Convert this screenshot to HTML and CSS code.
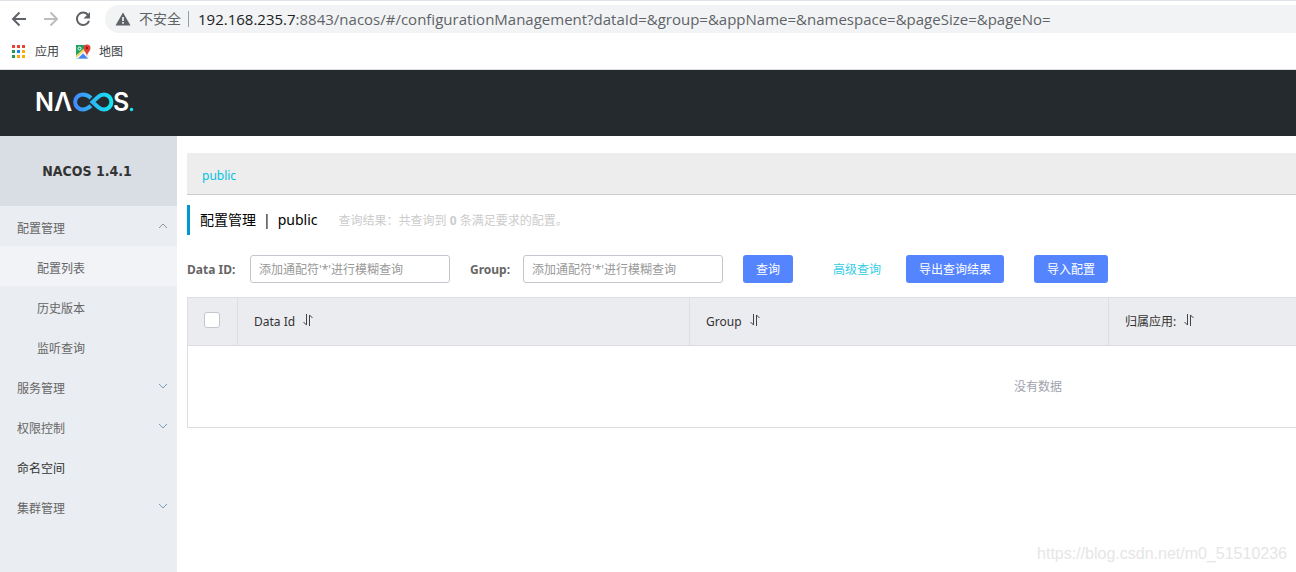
FILE: index.html
```html
<!DOCTYPE html>
<html lang="zh-CN">
<head>
<meta charset="utf-8">
<title>Nacos</title>
<link rel="stylesheet" href="styles.css">
</head>
<body>
<div class="window">
  <div class="browser">
    <div class="toolbar">
      <button class="nav-btn" type="button" aria-label="后退"><svg width="16" height="16" viewBox="0 0 16 16"><path d="M15 8H2M8.500 1.500L2 8l6.500 6.500" fill="none" stroke="#5f6368" stroke-width="2"/></svg></button>
      <button class="nav-btn" type="button" aria-label="前进"><svg width="16" height="16" viewBox="0 0 16 16"><path d="M1 8h13M7.500 1.500L14 8l-6.500 6.500" fill="none" stroke="#babcbe" stroke-width="2"/></svg></button>
      <button class="nav-btn" type="button" aria-label="刷新"><svg width="16" height="16" viewBox="0 0 16 16"><path d="M13.200 4.200A6.200 6.200 0 1 0 14 9.800" fill="none" stroke="#5f6368" stroke-width="2"/><path d="M15 1v6.500H8.500z" fill="#5f6368"/></svg></button>
      <div class="address">
        <svg width="16" height="14" viewBox="0 0 16 14"><path d="M8 0.500L15.500 13.500H0.500z" fill="#5f6368"/><path d="M7.200 5h1.600v4H7.200zM7.200 10h1.600v1.700H7.200z" fill="#fff"/></svg>
        <span class="insecure">不安全</span>
        <span class="url"><span class="host">192.168.235.7</span>:8843/nacos/#/configurationManagement?dataId=&amp;group=&amp;appName=&amp;namespace=&amp;pageSize=&amp;pageNo=</span>
      </div>
    </div>
    <nav class="bookmarks">
      <a href="#apps"><svg width="14" height="14" viewBox="0 0 14 14"><path d="M0 0h3v3H0zM5 0h3v3H5zM10 0h3v3h-3z" fill="#ea4335"/><path d="M0 5h3v3H0zM0 10h3v3H0z" fill="#249a4b"/><path d="M5 5h3v3H5z" fill="#1a84f0"/><path d="M10 5h3v3h-3zM5 10h3v3H5zM10 10h3v3h-3z" fill="#fbab07"/></svg>应用</a>
      <a href="#maps"><svg width="15" height="15" viewBox="0 0 15 15"><path d="M0 1h12v13.500H0z" fill="#1fa463"/><path d="M0 13L9 5l4 4v5.500H0z" fill="#f4f4f4"/><path d="M2 14.500l5-5 5 5z" fill="#4285f4"/><path d="M0 11.500l8-7 1.500 1.500L0 14z" fill="#fdd663"/><path d="M11 12C10.500 8.500 7.500 7 7.500 4a3.500 3.500 0 0 1 7 0c0 3-3 4.500-3.500 8z" fill="#e34133"/><circle cx="11" cy="4" r="1.200" fill="#8c1c15"/><circle cx="3.500" cy="4.500" r="1.500" fill="none" stroke="#fff"/></svg>地图</a>
    </nav>
  </div>
  <header class="header">
    <a href="#home" aria-label="NACOS">
      <svg class="logo" width="98" height="20" viewBox="0 0 98 20">
        <defs><linearGradient id="loop" gradientUnits="userSpaceOnUse" x1="37" y1="0" x2="76" y2="0"><stop offset="0" stop-color="#4488fb"/><stop offset="1" stop-color="#12e9f0"/></linearGradient></defs>
        <text x="-2" y="18">N</text><text x="17" y="18">Λ</text><text x="76" y="18">S</text>
        <path d="M54 5C51 2.200 49 1.600 45.500 1.600A7.400 7.400 0 0 0 45.500 16.400C49 16.400 51 15.600 54 12.800M55.500 9L61 4C63 2.200 64.500 1.600 67 1.600A7.400 7.400 0 0 1 67 16.400C64.500 16.400 63 15.800 61 14Z" fill="none" stroke="url(#loop)" stroke-width="4"/>
        <circle cx="94.500" cy="16.500" r="1.700" fill="#12e9f0"/>
      </svg>
    </a>
  </header>
  <div class="body">
    <aside class="sidebar">
      <h1 class="version">NACOS 1.4.1</h1>
      <nav class="menu">
        <a href="#config">配置管理<svg width="10" height="6" viewBox="0 0 10 6"><path d="M1 5l4-4 4 4"/></svg></a>
        <a class="sub active" href="#list">配置列表</a>
        <a class="sub" href="#history">历史版本</a>
        <a class="sub" href="#listen">监听查询</a>
        <a href="#service">服务管理<svg class="down" width="10" height="6" viewBox="0 0 10 6"><path d="M1 1l4 4 4-4"/></svg></a>
        <a href="#auth">权限控制<svg class="down" width="10" height="6" viewBox="0 0 10 6"><path d="M1 1l4 4 4-4"/></svg></a>
        <a class="leaf" href="#namespace">命名空间</a>
        <a href="#cluster">集群管理<svg class="down" width="10" height="6" viewBox="0 0 10 6"><path d="M1 1l4 4 4-4"/></svg></a>
      </nav>
    </aside>
    <main class="main">
      <div class="namespaces"><a href="#public">public</a></div>
      <div class="title">
        <h2>配置管理</h2><span class="bar">|</span><span>public</span>
        <p class="result">查询结果：共查询到 <strong>0</strong> 条满足要求的配置。</p>
      </div>
      <form class="query">
        <label for="data-id">Data ID:</label>
        <input id="data-id" type="text" placeholder="添加通配符'*'进行模糊查询">
        <label class="second" for="group">Group:</label>
        <input id="group" type="text" placeholder="添加通配符'*'进行模糊查询">
        <button class="btn search" type="button">查询</button>
        <a class="advanced" href="#advanced">高级查询</a>
        <button class="btn export" type="button">导出查询结果</button>
        <button class="btn import" type="button">导入配置</button>
      </form>
      <table class="table">
        <colgroup><col class="c-check"><col class="c-id"><col class="c-group"><col class="c-app"><col></colgroup>
        <thead>
          <tr>
            <th class="check"><input type="checkbox" aria-label="全选"></th>
            <th>Data Id<button class="sort" type="button" aria-label="排序"><svg width="11" height="12" viewBox="0 0 11 12"><path d="M4.500 0v11L1.500 8M7.500 12V1L10.500 4"/></svg></button></th>
            <th>Group<button class="sort" type="button" aria-label="排序"><svg width="11" height="12" viewBox="0 0 11 12"><path d="M4.500 0v11L1.500 8M7.500 12V1L10.500 4"/></svg></button></th>
            <th>归属应用:<button class="sort" type="button" aria-label="排序"><svg width="11" height="12" viewBox="0 0 11 12"><path d="M4.500 0v11L1.500 8M7.500 12V1L10.500 4"/></svg></button></th>
            <th></th>
          </tr>
        </thead>
        <tbody><tr><td colspan="5">没有数据</td></tr></tbody>
      </table>
    </main>
  </div>
  <div class="watermark">https://blog.csdn.net/m0_51510236</div>
</div>
</body>
</html>
```
FILE: styles.css
```css
* { box-sizing: border-box; }
body {
  margin: 0;
  font: 12px/20px "Noto Sans", "Noto Sans CJK SC", sans-serif;
  color: #333;
  background: #fff;
}
a { color: inherit; text-decoration: none; }
button, input { font: inherit; }
h1, h2, p { margin: 0; font-weight: 400; }
svg { display: block; flex: none; }
.window {
  position: relative;
  display: flex;
  flex-direction: column;
  min-height: 100vh;
  overflow: hidden;
}
.browser { border-top: 1px solid #dee1e6; border-bottom: 1px solid #dadce0; }
.toolbar { display: flex; align-items: center; height: 36px; padding-left: 11px; }
.nav-btn {
  display: flex;
  align-items: center;
  justify-content: center;
  width: 16px;
  height: 16px;
  margin-right: 16px;
  padding: 0;
  border: 0;
  background: none;
}
.address {
  display: flex;
  flex: 1;
  align-items: center;
  height: 28px;
  margin-left: -2px;
  padding-left: 10px;
  border-radius: 14px 0 0 14px;
  background: #f1f3f4;
  color: #5f6368;
  font-size: 14px;
  white-space: nowrap;
}
.insecure { margin-left: 8px; }
.url {
  margin-left: 7px;
  padding-left: 9px;
  border-left: 1px solid #9a9da1;
  font: 15px/16px "Open Sans", sans-serif;
}
.host { color: #202124; }
.bookmarks {
  display: flex;
  align-items: center;
  gap: 17px;
  height: 32px;
  padding: 0 0 3px 12px;
}
.bookmarks a { display: flex; align-items: center; gap: 9px; color: #3c4043; }
.bookmarks a + a { gap: 8px; }
.header {
  display: flex;
  align-items: center;
  height: 66px;
  padding-left: 37px;
  background: #252a2f;
}
.logo { overflow: visible; }
.logo text { fill: #fff; font: 600 25px Inter, sans-serif; }
.body { display: flex; flex: 1; }
.sidebar { flex: none; width: 177px; background: #eaedf1; }
.version {
  height: 70px;
  padding-right: 3px;
  background: #d9dde4;
  font: bold 14px/70px "DejaVu Sans Condensed", "DejaVu Sans", sans-serif;
  text-align: center;
}
.menu a {
  display: flex;
  justify-content: space-between;
  height: 40px;
  padding: 0 9px 0 17px;
  color: #666;
  line-height: 46px;
}
.menu .sub { padding-left: 37px; }
.menu .active { background: #f2f3f7; }
.menu .leaf { color: #333; }
.menu svg { margin-top: 17px; fill: none; stroke: #9b8f8b; }
.menu .down { stroke: #7b98b4; }
.main { flex: 1; min-width: 0; padding: 17px 0 0 10px; }
.namespaces {
  height: 42px;
  padding-left: 15px;
  border-bottom: 1px solid #ccc;
  background: #ededed;
  color: #00c1de;
  line-height: 46px;
}
.title {
  display: flex;
  height: 30px;
  margin-top: 10px;
  padding-left: 10px;
  border-left: 3px solid #0098ca;
  color: #000;
  font-size: 14px;
  line-height: 30px;
}
.title h2 { font-size: 14px; }
.bar { margin: 0 7px; }
.result { margin-left: 21px; color: #ccc; font-size: 12px; line-height: 32px; }
.query { display: flex; align-items: center; margin-top: 20px; white-space: nowrap; }
.query label { width: 63px; padding-top: 2px; color: #666; font-weight: 700; }
.query .second { width: 53px; margin-left: 20px; }
.query input {
  width: 200px;
  height: 28px;
  padding: 1px 8px 0;
  border: 1px solid #c4c6cf;
  border-radius: 3px;
  background: #fff;
}
.query input::placeholder { color: #999; opacity: 1; }
.btn {
  height: 28px;
  padding: 2px 13px 0;
  border: 0;
  border-radius: 3px;
  background: #5584ff;
  color: #fff;
}
.search { margin-left: 20px; }
.advanced { margin-left: 40px; padding-top: 2px; color: #33cde5; }
.export { margin-left: 25px; }
.import { margin-left: 30px; }
.table {
  width: 100%;
  min-width: 1702px;
  margin-top: 14px;
  border: 1px solid #dcdee3;
  border-collapse: collapse;
  table-layout: fixed;
}
.c-check { width: 50px; }
.c-id { width: 452px; }
.c-group { width: 419px; }
.c-app { width: 390px; }
.table th {
  height: 48px;
  padding: 0 16px;
  border: 1px solid #dcdee3;
  background: #ebecf0;
  font-weight: 400;
  text-align: left;
}
.table td { height: 82px; padding: 0; color: #a0a2ad; text-align: center; }
.check input {
  display: block;
  width: 16px;
  height: 16px;
  margin: 0 0 3px;
  border: 1px solid #c4c6cf;
  border-radius: 3px;
  background: #fff;
  appearance: none;
}
.sort { margin-left: 7px; padding: 0; border: 0; background: none; }
.sort svg { fill: none; stroke: #444; }
.watermark {
  position: absolute;
  right: 9px;
  bottom: 8px;
  color: #e6e6e6;
  font: 16px/20px "Liberation Sans", sans-serif;
}
```
